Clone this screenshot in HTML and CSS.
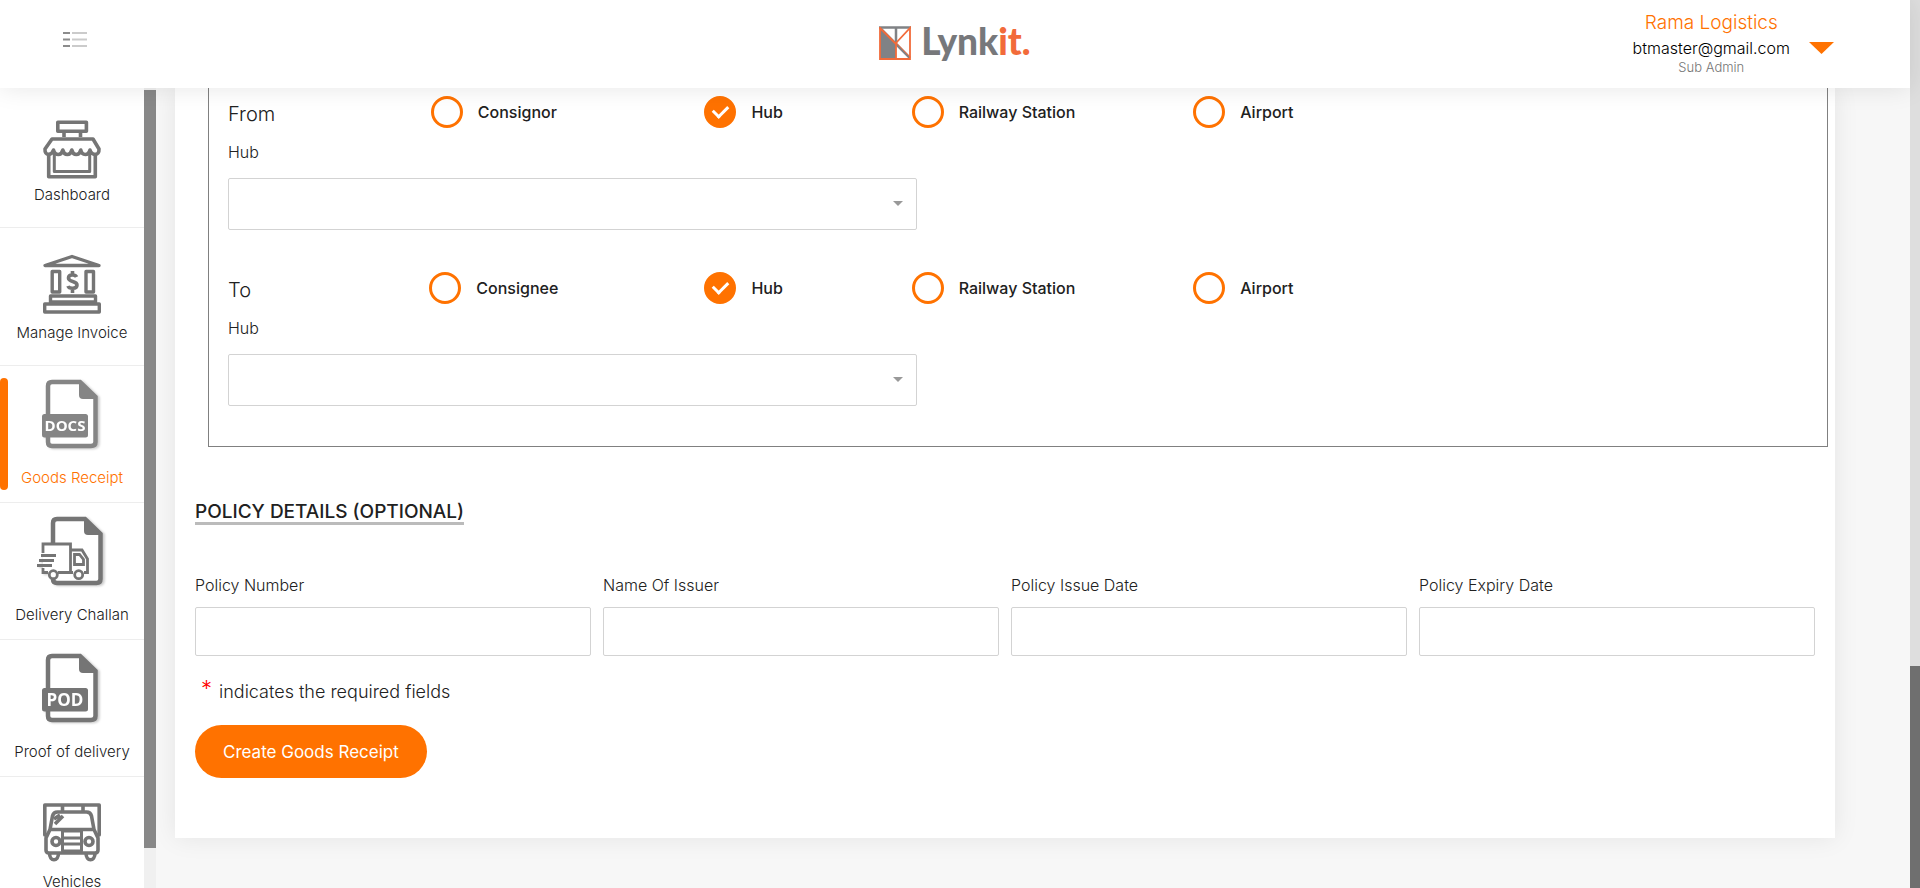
FILE: index.html
```html
<!DOCTYPE html>
<html lang="en">
<head>
<meta charset="utf-8">
<meta name="viewport" content="width=device-width, initial-scale=1">
<title>Lynkit - Goods Receipt</title>
<link rel="stylesheet" href="styles.css">
</head>
<body>
<div class="app">
  <div class="page">
    <header class="topbar">
      <button class="menu-toggle" type="button" aria-label="Toggle menu">
        <svg width="24" height="16" viewBox="0 0 24 16">
          <path d="M0 1h7M0 7.500h7M0 14h7" stroke="#8c8c8c" stroke-width="2"/>
          <path d="M9 1h15M9 7.500h15M9 14h15" stroke="#cbcbcb" stroke-width="2"/>
        </svg>
      </button>
      <a class="brand" href="#">
        <svg width="32" height="34" viewBox="0 0 32 34" fill="none">
          <path d="M1 2 17 18v15H1z" fill="#808285"/>
          <path d="M0 1.500h32M17 1v16" stroke="#808285" stroke-width="2.500"/>
          <path d="M1 2l30 30" stroke="#808285" stroke-width="2.500"/>
          <path d="M1 1v32h30V2L17 17v16M1 2l16 16" stroke="#f26b3a" stroke-width="1.800"/>
          <path d="M17 16.500 31 31" stroke="#f26b3a" stroke-width="1"/>
        </svg>
        <span class="brand-name">Lynk<span class="brand-accent">it.</span></span>
      </a>
      <div class="account">
        <div class="account-text">
          <span class="account-company">Rama Logistics</span>
          <span class="account-email">btmaster@gmail.com</span>
          <span class="account-role">Sub Admin</span>
        </div>
        <button class="account-toggle" type="button" aria-label="Account menu">
          <svg width="25" height="12" viewBox="0 0 25 12"><path d="M0 0h25L12.500 12z" fill="#ff7200"/></svg>
        </button>
      </div>
    </header>

    <div class="body">
      <nav class="sidebar" aria-label="Main">
        <a class="nav-item nav-item-first" href="#">
          <svg width="60" height="62" viewBox="0 0 60 62" fill="none" stroke="#757575" stroke-width="3.600" stroke-linejoin="round">
            <path d="M15.800 3.200h28.600v9H15.800zM22 13v5M38.500 13v5"/>
            <path d="M10 20h41l6 10c.5 7-7 7-9 1-1.500 6-8 6-9.200 0-1.500 6-7.500 6-9 0-1.500 6-7.500 6-9 0-1.500 6-7.500 6-9.300 0-2 6-9 6-8.500-1z"/>
            <path d="M6.700 36v21.800h46.600V36"/>
            <path d="M12.300 35v17.500h35.400V35" stroke-width="3"/>
          </svg>
          <span class="nav-label">Dashboard</span>
        </a>
        <a class="nav-item" href="#">
          <svg width="60" height="62" viewBox="0 0 60 62" fill="none" stroke="#757575" stroke-width="3.400" stroke-linejoin="round">
            <path d="M3 12.500h54L30 3.500z"/>
            <path d="M10.200 18.500h7.500V39h-7.500zM44 18.500h7.500V39H44zM8.500 43h45v6h-45zM2.700 51h54.600v8H2.700z"/>
            <path d="M34.500 24c-1-2.500-8-3-8 1 0 4.500 8.500 2.500 8.500 7 0 4.500-8 4-9 1M30.500 18v4M30.500 36v4" stroke-width="3.600"/>
          </svg>
          <span class="nav-label">Manage Invoice</span>
        </a>
        <a class="nav-item nav-item-doc nav-item-active" href="#" aria-current="page">
          <svg class="doc-icon" width="64" height="72" viewBox="0 0 64 72">
            <path d="M40 4H12Q8 4 8 8v56q0 4 4 4h39q4.500 0 4.500-4V19z" fill="#fff" stroke="#858585" stroke-width="4.500"/>
            <path d="M39 3v14q0 4 4 4h14z" fill="#858585"/>
            <rect x="2" y="36" width="46" height="23.500" rx="2.500" fill="#858585"/>
            <text x="25" y="53" class="doc-text">DOCS</text>
          </svg>
          <span class="nav-label">Goods Receipt</span>
        </a>
        <a class="nav-item nav-item-doc" href="#">
          <svg class="doc-icon" width="72" height="72" viewBox="0 0 72 72" fill="none" stroke="#757575">
            <path d="M49 4H21q-4 0-4 4v56q0 4 4 4h39.500q4 0 4-4V19z" fill="#fff" stroke-width="4.500"/>
            <path d="M48 3v13q0 4 4 4h14z" fill="#757575" stroke="none"/>
            <path d="M7 57.500V29h28v28.500z" fill="#fff" stroke="none"/>
            <path d="M35 34.500h11l6.500 8v15H35z" fill="#fff" stroke="none"/>
            <path d="M7 38v-9h27.500v28.500H22M7 53v4.500h5M34.500 35H46l5.500 9v13.500H48M34.500 57.500H37" stroke-width="2.800"/>
            <path d="M38.500 39.500h5l4 5v5h-9zM5 40.500h15M3 45.500h15M1 50.500h15" stroke-width="2.800"/>
            <circle cx="17.300" cy="59.700" r="4" fill="#fff" stroke-width="2.800"/>
            <circle cx="42.700" cy="59.700" r="4" fill="#fff" stroke-width="2.800"/>
          </svg>
          <span class="nav-label">Delivery Challan</span>
        </a>
        <a class="nav-item nav-item-doc" href="#">
          <svg class="doc-icon" width="64" height="72" viewBox="0 0 64 72">
            <path d="M40 4H12Q8 4 8 8v56q0 4 4 4h39q4.500 0 4.500-4V19z" fill="#fff" stroke="#757575" stroke-width="4.500"/>
            <path d="M39 3v14q0 4 4 4h14z" fill="#757575"/>
            <rect x="2" y="36" width="46" height="23.500" rx="2.500" fill="#757575"/>
            <text x="25" y="54" class="doc-text doc-text-large">POD</text>
          </svg>
          <span class="nav-label">Proof of delivery</span>
        </a>
        <a class="nav-item" href="#">
          <svg width="60" height="62" viewBox="0 0 60 62" fill="none" stroke="#757575" stroke-width="3.600" stroke-linejoin="round">
            <path d="M6 33H2.800V3h54.400v30H54M20.500 4v6M41 4v6"/>
            <path d="M8 27.500 10.500 14q1-4 5-4h29q4 0 5 4L52 27.500zM8 27.500 4 36v12q0 3 3 3h46q3 0 3-3V36l-4-8.500"/>
            <path d="M20.500 29h19v20h-19zM21 36h18M21 42h18" stroke-width="3"/>
            <circle cx="14" cy="39.500" r="4"/><circle cx="47" cy="39.500" r="4"/>
            <path d="M7.500 51c0 9 9 9 9 0M44 51c0 9 9 9 9 0M12 17l6-4M13 22l8-8" />
          </svg>
          <span class="nav-label">Vehicles</span>
        </a>
      </nav>
      <div class="side-scroll"><div class="side-thumb"></div></div>

      <main class="content">
        <form class="card">
          <div class="route">
            <div class="leg">
              <div class="choices" role="radiogroup" aria-labelledby="from-title">
                <span class="choices-title" id="from-title">From</span>
                <label class="choice"><input class="radio" type="radio" name="from">Consignor</label>
                <label class="choice"><input class="radio" type="radio" name="from" checked>Hub</label>
                <label class="choice"><input class="radio" type="radio" name="from">Railway Station</label>
                <label class="choice"><input class="radio" type="radio" name="from">Airport</label>
              </div>
              <label class="field-label" for="from-hub">Hub</label>
              <div class="select-box">
                <select class="select" id="from-hub"><option></option></select>
              </div>
            </div>
            <div class="leg">
              <div class="choices" role="radiogroup" aria-labelledby="to-title">
                <span class="choices-title" id="to-title">To</span>
                <label class="choice"><input class="radio" type="radio" name="to">Consignee</label>
                <label class="choice"><input class="radio" type="radio" name="to" checked>Hub</label>
                <label class="choice"><input class="radio" type="radio" name="to">Railway Station</label>
                <label class="choice"><input class="radio" type="radio" name="to">Airport</label>
              </div>
              <label class="field-label" for="to-hub">Hub</label>
              <div class="select-box">
                <select class="select" id="to-hub"><option></option></select>
              </div>
            </div>
          </div>

          <h2 class="section-title">POLICY DETAILS (OPTIONAL)</h2>

          <div class="fields">
            <div class="field"><label class="field-label" for="policy-number">Policy Number</label><input class="input" id="policy-number" type="text"></div>
            <div class="field"><label class="field-label" for="issuer">Name Of Issuer</label><input class="input" id="issuer" type="text"></div>
            <div class="field"><label class="field-label" for="issue-date">Policy Issue Date</label><input class="input" id="issue-date" type="text"></div>
            <div class="field"><label class="field-label" for="expiry-date">Policy Expiry Date</label><input class="input" id="expiry-date" type="text"></div>
          </div>

          <p class="note"><span class="note-mark">*</span>indicates the required fields</p>
          <button class="submit" type="submit">Create Goods Receipt</button>
        </form>
      </main>
    </div>
  </div>
  <div class="page-scroll"><div class="page-thumb"></div></div>
</div>
</body>
</html>
```
FILE: styles.css
```css
* { box-sizing: border-box; }

body {
  margin: 0;
  background: #f7f7f7;
  color: #212121;
  font-family: Inter, "Century Gothic", sans-serif;
  font-size: 16px;
  font-weight: 300;
  line-height: 24px;
}

button {
  border: 0;
  padding: 0;
  background: none;
  font: inherit;
  cursor: pointer;
}

svg { display: block; }

.app {
  display: flex;
  height: 100vh;
  overflow: hidden;
}

.page {
  flex: 1;
  min-width: 0;
  display: flex;
  flex-direction: column;
}

/* Top bar */
.topbar {
  position: relative;
  z-index: 2;
  flex: none;
  display: grid;
  grid-template-columns: 1fr auto 1fr;
  align-items: center;
  height: 88px;
  padding: 0 63px;
  background: #fff;
  box-shadow: 0 0 24px rgba(0, 0, 0, 0.1);
}

.menu-toggle {
  justify-self: start;
  padding-bottom: 8px;
}

.brand {
  display: flex;
  align-items: center;
  gap: 10px;
  padding-bottom: 3px;
  color: #77787b;
  text-decoration: none;
}

.brand-name {
  font-family: Lato, sans-serif;
  font-size: 37px;
  font-weight: 900;
  line-height: 36px;
  padding-bottom: 4px;
}

.brand-accent { color: #f26b3a; }

.account {
  justify-self: end;
  display: flex;
  align-items: center;
  gap: 19px;
  margin-right: 13px;
}

.account-text {
  display: flex;
  flex-direction: column;
  align-items: center;
  padding-bottom: 4px;
}

.account-company {
  color: #ff7200;
  font-size: 19px;
}

.account-email {
  color: #000;
  line-height: 26px;
}

.account-role {
  color: #757575;
  font-size: 13px;
  line-height: 12px;
}

.account-toggle { padding-top: 8px; }

/* Layout below the top bar */
.body {
  flex: 1;
  min-height: 0;
  display: flex;
  overflow: hidden;
}

.sidebar {
  flex: none;
  width: 144px;
  background: #fff;
}

.nav-item {
  position: relative;
  display: flex;
  flex-direction: column;
  align-items: center;
  gap: 6px;
  padding: 25px 0 20px;
  border-bottom: 1px solid #ededed;
  color: #212121;
  font-size: 15px;
  text-decoration: none;
}

.nav-item-first {
  gap: 2px;
  padding-top: 31px;
}

.nav-item-doc {
  gap: 16px;
  padding: 12px 0;
}

.nav-item-active { color: #ff7200; }

.nav-item-active::before {
  content: "";
  position: absolute;
  left: 0;
  top: 12px;
  bottom: 12px;
  width: 8px;
  border-radius: 4px;
  background: #ff7200;
}

.nav-label { white-space: nowrap; }

.doc-icon { filter: drop-shadow(2px 1px 1px rgba(0, 0, 0, 0.2)); }

.doc-text {
  fill: #fff;
  stroke: none;
  font-family: "Open Sans", sans-serif;
  font-size: 15px;
  font-weight: 700;
  text-anchor: middle;
}

.doc-text-large { font-size: 17px; }

.side-scroll {
  flex: none;
  width: 12px;
  padding-top: 2px;
  background: #f0f0f0;
}

.side-thumb {
  height: 95%;
  background: #888;
}

.page-scroll {
  flex: none;
  display: flex;
  flex-direction: column;
  justify-content: flex-end;
  width: 10px;
  background: #dedede;
}

.page-thumb {
  height: 25%;
  background: #6f6f6f;
}

/* Form card */
.content {
  flex: 1;
  min-width: 0;
  padding: 0 75px 50px 19px;
}

.card {
  padding: 0 20px 60px;
  background: #fff;
  box-shadow: 0 0 24px rgba(0, 0, 0, 0.08);
}

.route {
  display: flex;
  flex-direction: column;
  gap: 42px;
  margin: 0 -13px 0 13px;
  padding: 8px 19px 40px;
  border: solid #808080;
  border-width: 0 1px 1px;
}

.choices {
  display: grid;
  grid-template-columns: 141fr repeat(4, 250fr) 440fr;
  align-items: center;
  margin-bottom: 12px;
}

.choices-title {
  padding-top: 4px;
  font-size: 20px;
}

.choice {
  display: flex;
  align-items: center;
  justify-content: center;
  gap: 15px;
  color: #212121;
  font-size: 16px;
  font-weight: 500;
  white-space: nowrap;
}

.radio {
  appearance: none;
  flex: none;
  display: grid;
  place-items: center;
  width: 32px;
  height: 32px;
  margin: 0;
  border: 3px solid #ff7200;
  border-radius: 50%;
  background: #fff;
}

.radio:checked { background: #ff7200; }

.radio:checked::before {
  content: "";
  width: 12px;
  height: 7px;
  margin-bottom: 4px;
  border: solid #fff;
  border-width: 0 0 3px 3px;
  transform: rotate(-45deg);
}

.field-label {
  display: block;
  color: #212121;
}

.select-box {
  position: relative;
  width: 43.6%;
  min-width: 240px;
  margin-top: 14px;
}

.select-box::after {
  content: "";
  position: absolute;
  right: 14px;
  top: 23px;
  border: solid transparent;
  border-width: 5px 5px 0;
  border-top-color: #999;
  pointer-events: none;
}

.select,
.input {
  display: block;
  width: 100%;
  border: 1px solid #d3d3d3;
  border-radius: 2px;
  padding: 0 12px;
  background: #fff;
  color: #212121;
  font: inherit;
}

.select {
  appearance: none;
  height: 52px;
}

.section-title {
  width: fit-content;
  margin: 55px 0 48px;
  border-bottom: 3px solid #bbb;
  font-size: 19px;
  font-weight: 500;
  line-height: 20px;
}

.fields {
  display: grid;
  grid-template-columns: repeat(4, 1fr);
  gap: 12px;
}

.input {
  height: 49px;
  margin-top: 10px;
}

.note {
  display: flex;
  gap: 7px;
  margin: 24px 0 21px;
  padding-left: 6px;
  font-size: 18px;
}

.note-mark {
  color: #f00;
  font-size: 22px;
  line-height: 16px;
}

.submit {
  height: 53px;
  padding: 0 28px;
  border-radius: 27px;
  background: #ff7200;
  color: #fff;
  font-size: 17px;
  font-weight: 400;
}
```
